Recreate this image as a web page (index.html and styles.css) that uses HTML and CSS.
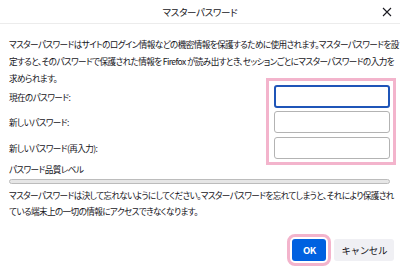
FILE: index.html
```html
<!DOCTYPE html>
<html lang="ja">
<head>
    <meta charset="UTF-8">
    <meta name="viewport" content="width=device-width, initial-scale=1.0">
    <title>マスターパスワード</title>
    <link rel="stylesheet" href="styles.css">
</head>
<body>
    <div class="dialog">
        <div class="titlebar">
            <span class="title">マスターパスワード</span>
            <svg class="close" width="10" height="10" viewBox="0 0 10 10">
                <path d="M1 1 L9 9 M9 1 L1 9" stroke="#1c1b22" stroke-width="1.1" fill="none"/>
            </svg>
        </div>

        <div class="content">
            <p class="desc">マスターパスワードはサイトのログイン情報などの機密情報を保護するために使用されます。マスターパスワードを設定すると、そのパスワードで保護された情報を Firefox が読み出すとき、セッションごとにマスターパスワードの入力を求められます。</p>

            <div class="form">
                <div class="labels">
                    <label class="row-1">現在のパスワード:</label>
                    <label class="row-2">新しいパスワード:</label>
                    <label class="row-3">新しいパスワード(再入力):</label>
                </div>
                <div class="fields highlight">
                    <input type="password" class="field focused">
                    <input type="password" class="field">
                    <input type="password" class="field">
                </div>
            </div>

            <div class="quality">パスワード品質レベル</div>
            <div class="meter"></div>

            <p class="warning">マスターパスワードは決して忘れないようにしてください。マスターパスワードを忘れてしまうと、それにより保護されている端末上の一切の情報にアクセスできなくなります。</p>

            <div class="buttons">
                <button class="btn primary">OK</button>
                <button class="btn">キャンセル</button>
            </div>
        </div>
    </div>
</body>
</html>
```

FILE: styles.css
```css
html, body {
    margin: 0;
    padding: 0;
    background: #fff;
}
body {
    font-family: "Noto Sans CJK JP", "Noto Sans", sans-serif;
    font-feature-settings: "palt";
    color: #15141a;
    width: 400px;
    height: 269px;
    overflow: hidden;
}
.titlebar {
    position: relative;
    height: 23px;
    border-bottom: 1px solid #ececec;
    display: flex;
    align-items: center;
    justify-content: center;
}
.title {
    font-size: 9.5px;
    letter-spacing: -0.3px;
}
.close {
    position: absolute;
    right: 8px;
    top: 7px;
}
.content {
    padding: 12px 10px 0 9px;
}
.desc, .labels, .quality, .warning {
    font-size: 8.6px;
    letter-spacing: -0.6px;
}
.desc {
    margin: 0 -9px 0 0;
    line-height: 17px;
}
.form {
    display: flex;
    justify-content: space-between;
    margin-top: -2px;
}
.labels {
    display: flex;
    flex-direction: column;
}
.labels label {
    display: flex;
    align-items: center;
}
.row-1 { height: 23px; }
.row-2 { height: 22px; margin-top: 3px; }
.row-3 { height: 22px; margin-top: 4px; }
.fields {
    display: flex;
    flex-direction: column;
    width: 116px;
}
.field {
    box-sizing: border-box;
    width: 116px;
    height: 22px;
    margin: 0;
    border: 1px solid #b3b3b3;
    border-radius: 3px;
    background: #fff;
}
.field.focused {
    height: 23px;
    border: 2px solid #1f55b8;
}
.field + .field {
    margin-top: 3px;
}
.field + .field + .field {
    margin-top: 4px;
}
.highlight {
    position: relative;
}
.highlight::after {
    content: "";
    position: absolute;
    top: -7px;
    left: -8px;
    right: -6px;
    bottom: -6px;
    border: 3px solid #f3b4cc;
}
.quality {
    margin-top: 3px;
    line-height: 14px;
}
.meter {
    margin-top: 3px;
    height: 3px;
    border: 1px solid #bcbcbc;
    border-radius: 3px;
    background: #e6e6e6;
}
.warning {
    margin: 3px -5px 0 0;
    line-height: 16px;
}
.buttons {
    display: flex;
    justify-content: flex-end;
    gap: 8px;
    margin-top: 20px;
    margin-right: -4px;
}
.btn {
    height: 22px;
    padding: 0 7px;
    border: none;
    border-radius: 3px;
    background: #f0f0f4;
    color: #15141a;
    font-family: inherit;
    font-size: 9.5px;
    letter-spacing: -0.4px;
}
.btn.primary {
    width: 34px;
    padding: 0;
    background: #0061e0;
    color: #fff;
    font-weight: bold;
    outline: 3px solid #f3b4cc;
    outline-offset: 2px;
}
```
